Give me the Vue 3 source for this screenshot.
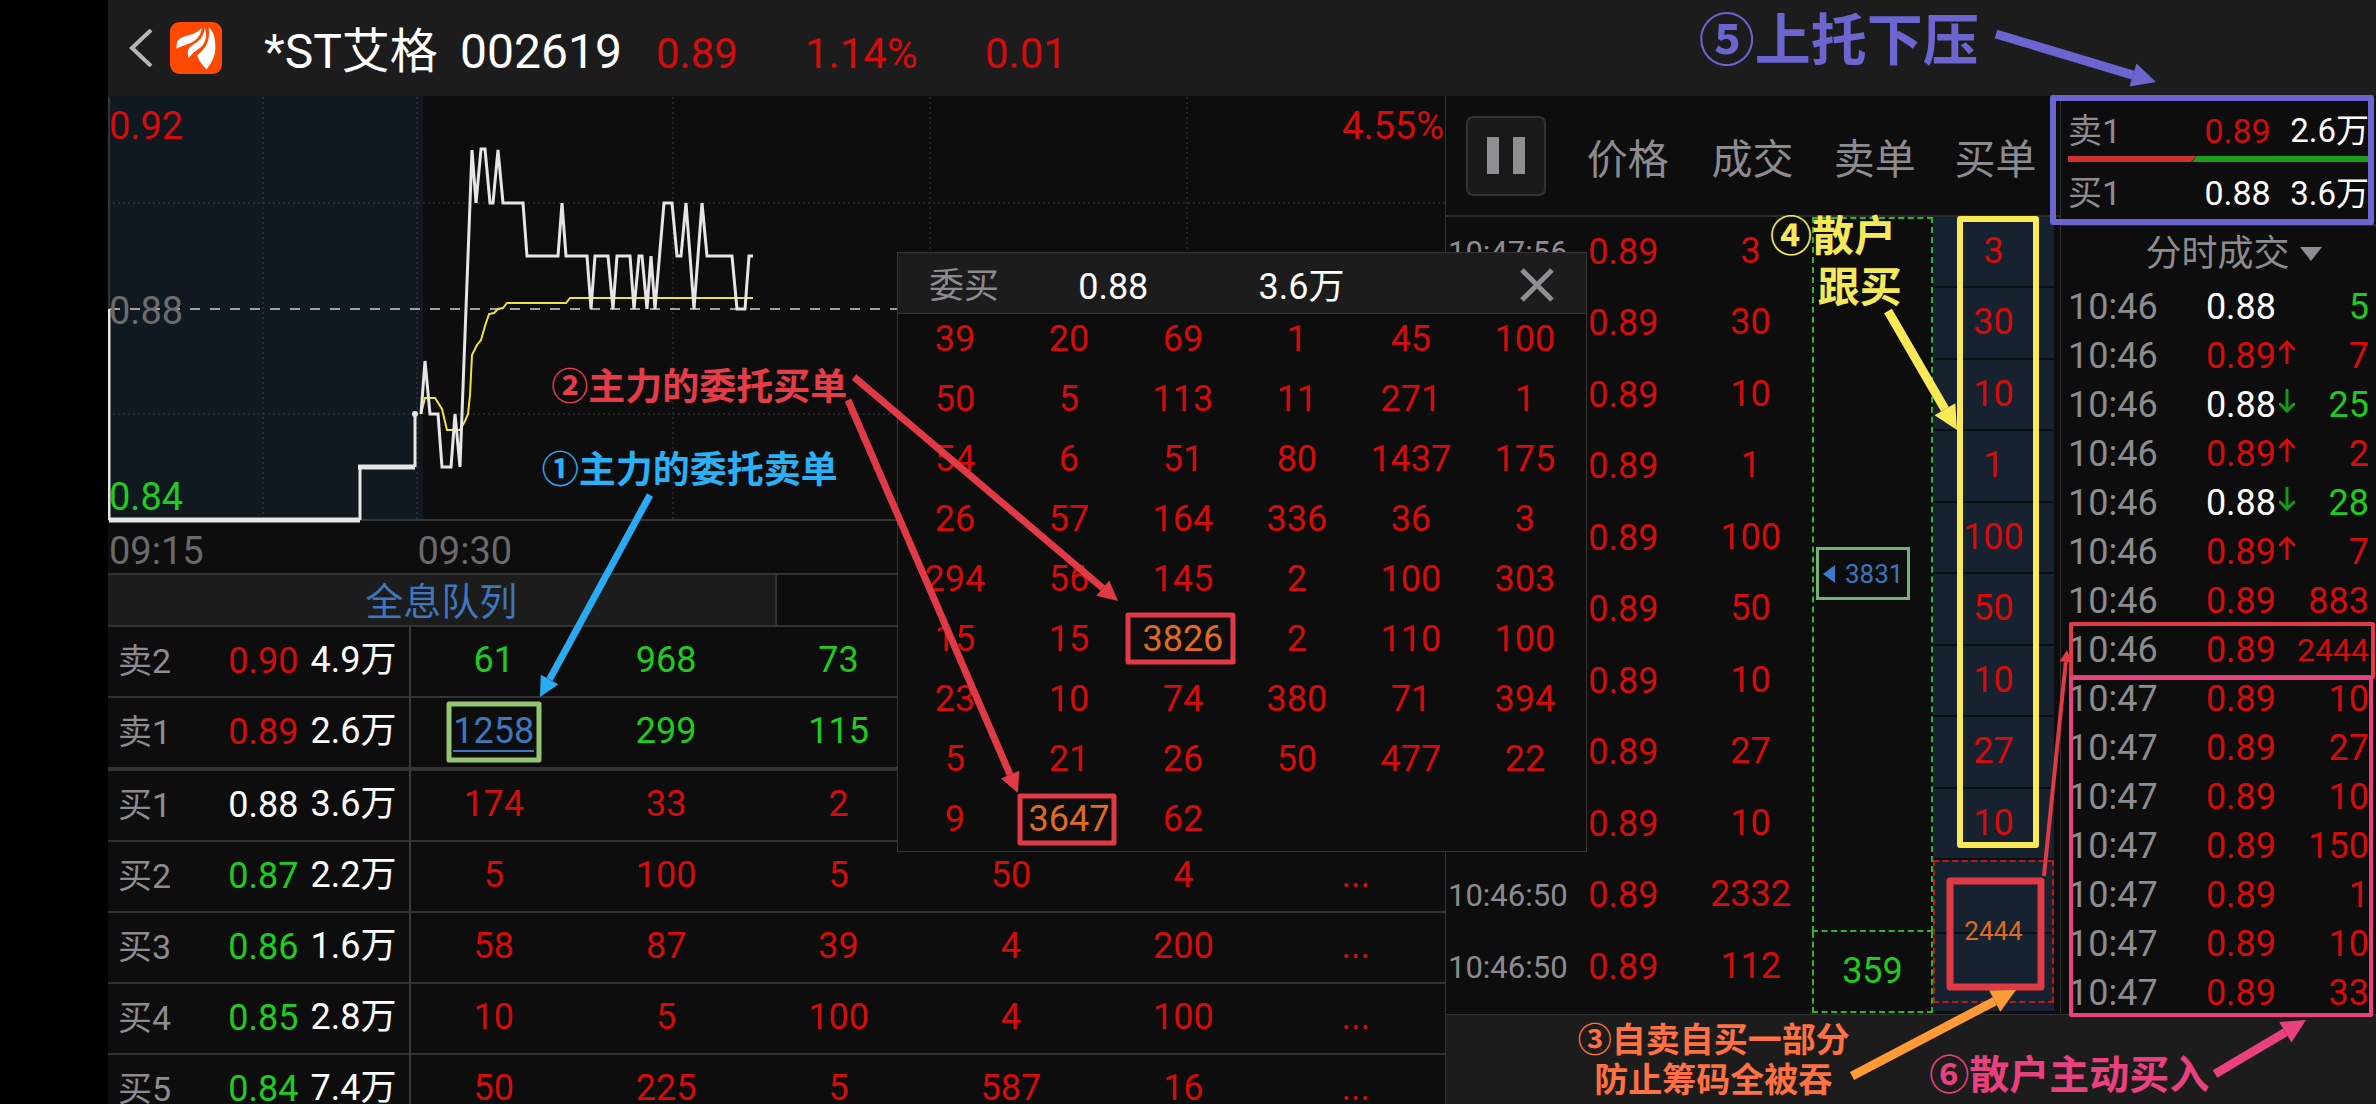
<script setup>
const levels = [
  { label: '卖2', price: '0.90', tone: 'up', qty: '4.9万', side: 'down', cells: ['61', '968', '73', '', '', ''] },
  { label: '卖1', price: '0.89', tone: 'up', qty: '2.6万', side: 'down', cells: ['1258', '299', '115', '', '', ''] },
  { label: '买1', price: '0.88', tone: 'flat', qty: '3.6万', side: 'up', cells: ['174', '33', '2', '', '', ''] },
  { label: '买2', price: '0.87', tone: 'down', qty: '2.2万', side: 'up', cells: ['5', '100', '5', '50', '4', '...'] },
  { label: '买3', price: '0.86', tone: 'down', qty: '1.6万', side: 'up', cells: ['58', '87', '39', '4', '200', '...'] },
  { label: '买4', price: '0.85', tone: 'down', qty: '2.8万', side: 'up', cells: ['10', '5', '100', '4', '100', '...'] },
  { label: '买5', price: '0.84', tone: 'down', qty: '7.4万', side: 'up', cells: ['50', '225', '5', '587', '16', '...'] },
]

const queue = [
  [39, 20, 69, 1, 45, 100],
  [50, 5, 113, 11, 271, 1],
  [54, 6, 51, 80, 1437, 175],
  [26, 57, 164, 336, 36, 3],
  [294, 56, 145, 2, 100, 303],
  [15, 15, 3826, 2, 110, 100],
  [23, 10, 74, 380, 71, 394],
  [5, 21, 26, 50, 477, 22],
  [9, 3647, 62, '', '', ''],
]

const deals = [
  { time: '10:47:56', vol: 3, buy: 3 },
  { time: '', vol: 30, buy: 30 },
  { time: '', vol: 10, buy: 10 },
  { time: '', vol: 1, buy: 1 },
  { time: '', vol: 100, buy: 100 },
  { time: '', vol: 50, buy: 50 },
  { time: '', vol: 10, buy: 10 },
  { time: '', vol: 27, buy: 27 },
  { time: '', vol: 10, buy: 10 },
  { time: '10:46:50', vol: 2332 },
  { time: '10:46:50', vol: 112 },
]

const ticks = [
  ['10:46', '0.88', '', 5],
  ['10:46', '0.89', 'u', 7],
  ['10:46', '0.88', 'd', 25],
  ['10:46', '0.89', 'u', 2],
  ['10:46', '0.88', 'd', 28],
  ['10:46', '0.89', 'u', 7],
  ['10:46', '0.89', '', 883],
  ['10:46', '0.89', '', 2444],
  ['10:47', '0.89', '', 10],
  ['10:47', '0.89', '', 27],
  ['10:47', '0.89', '', 10],
  ['10:47', '0.89', '', 150],
  ['10:47', '0.89', '', 1],
  ['10:47', '0.89', '', 10],
  ['10:47', '0.89', '', 33],
]

const arrows = [
  { color: '#e03a46', w: 7, from: [854, 377], to: [1118, 601], head: 20 },
  { color: '#e03a46', w: 7, from: [848, 400], to: [1018, 793], head: 20 },
  { color: '#29aaf2', w: 7, from: [650, 495], to: [540, 697], head: 20 },
  { color: '#ff9a36', w: 9, from: [1852, 1076], to: [2016, 990], head: 24 },
  { color: '#f9e957', w: 9, from: [1888, 311], to: [1957, 430], head: 24 },
  { color: '#6a65cf', w: 9, from: [1996, 34], to: [2156, 82], head: 24 },
  { color: '#e8417d', w: 9, from: [2215, 1074], to: [2306, 1020], head: 24 },
  { color: '#e03a46', w: 4, from: [2044, 876], to: [2067, 650], head: 12 },
]

function geometry(a) {
  const dx = a.to[0] - a.from[0]
  const dy = a.to[1] - a.from[1]
  const len = Math.hypot(dx, dy)
  const ux = dx / len
  const uy = dy / len
  const bx = a.to[0] - ux * a.head
  const by = a.to[1] - uy * a.head
  const h = a.head * 0.5
  return {
    ...a,
    end: [bx, by],
    tip: `${a.to[0]},${a.to[1]} ${bx - uy * h},${by + ux * h} ${bx + uy * h},${by - ux * h}`,
  }
}
const shapes = arrows.map(geometry)
</script>

<template>
  <div class="page">
    <header class="top">
      <button class="back" aria-label="返回">
        <svg viewBox="0 0 24 38" width="24" height="38"><path d="M22 1 3 19 22 37" /></svg>
      </button>
      <svg class="logo" viewBox="30 24 156 156" width="52" height="52" aria-hidden="true">
        <rect x="30" y="24" width="156" height="156" rx="28" fill="#ff4800" />
        <g fill="#fff">
          <path d="M50 104C49 84 53 76 64 71C88 61 112 60 125 41C124 60 114 74 98 84C88 90 62 97 50 104Z" />
          <path d="M86 133C82 118 82 106 91 98C106 87 132 78 134 40C142 62 139 84 124 98C110 110 98 114 86 133Z" />
          <path d="M140 166C128 154 116 142 112 124C134 106 152 86 146 40C160 50 168 76 166 104C164 134 152 148 140 166Z" />
        </g>
      </svg>
      <div class="title">
        <h1>*ST艾格</h1>
        <span class="code">002619</span>
        <span class="quote q1">0.89</span>
        <span class="quote q2">1.14%</span>
        <span class="quote">0.01</span>
      </div>
    </header>

    <main class="body">
      <section class="left">
        <div class="chart">
          <svg viewBox="108 96 1337 428" preserveAspectRatio="none">
            <rect x="108" y="96" width="315" height="424" fill="#101820" />
            <g class="dots">
              <path d="M263 97V520M417 97V520M673 97V520M930 97V520M1187 97V520" />
              <path d="M108 203H1445M108 414H1445" />
            </g>
            <path d="M108 520H1445" stroke="#363636" stroke-width="2" />
            <path d="M109 97V309" stroke="#555" stroke-width="1" />
            <path d="M110 309H1445" stroke="#a0a0a0" stroke-width="2" stroke-dasharray="10 10" />
            <polyline class="avg" points="421,414 425,398 435,398 442,409 447,430 460,430 465,421 468,414 470,395 472,355 477,345 481,340 485,326 489,314 494,313 498,309 503,308 507,303 566,303 570,298 753,298" />
            <path class="flat" d="M109 520H360M358 467H415" />
            <path class="price" d="M109 309V520M360 520V467M415 467V414" />
            <circle cx="415" cy="414" r="3" fill="#e6e6e6" />
            <polyline class="price" points="421,414 425,361 430,414 438,414 442,467 451,467 455,414 460,467 464,361 468,256 472,150 476,203 481,149 485,149 490,203 493,203 498,150 503,203 523,203 527,256 558,256 562,203 566,256 587,256 591,309 595,256 608,256 613,309 617,256 630,256 634,309 639,256 642,256 647,309 651,256 655,309 664,203 672,203 677,256 681,256 686,203 694,309 702,203 707,256 732,256 737,309 745,309 749,256 753,256" />
          </svg>
          <span class="lab red tl">0.92</span>
          <span class="lab red tr">4.55%</span>
          <span class="lab gray ml">0.88</span>
          <span class="lab green bl">0.84</span>
        </div>
        <div class="times"><span>09:15</span><span>09:30</span></div>
        <nav class="tabs"><button>全息队列</button></nav>
        <table class="levels">
          <colgroup><col class="c-label" /><col class="c-price" /><col class="c-qty" /><col v-for="n in 6" :key="n" /></colgroup>
          <tbody>
            <tr v-for="(l, i) in levels" :key="l.label" :class="{ split: i === 1 }">
              <th scope="row">{{ l.label }}</th>
              <td class="pr" :class="l.tone">{{ l.price }}</td>
              <td class="qty">{{ l.qty }}</td>
              <td v-for="(c, j) in l.cells" :key="j" class="num" :class="l.side">
                <a v-if="c === '1258'" href="#">{{ c }}</a>
                <template v-else>{{ c }}</template>
              </td>
            </tr>
          </tbody>
        </table>
      </section>

      <section class="mid">
        <div class="mid-head">
          <div class="pause-box">
            <button class="pause" aria-label="暂停"><i></i><i></i></button>
          </div>
          <span>价格</span><span class="c">成交</span><span class="c">卖单</span><span class="c">买单</span>
        </div>
        <table class="deals">
          <colgroup><col class="d1" /><col class="d2" /><col class="d3" /><col class="d4" /><col class="d5" /><col class="d6" /></colgroup>
          <tbody>
            <tr v-for="(d, i) in deals" :key="i" :class="i % 2 ? 'odd' : 'even'">
              <td class="t">{{ d.time }}</td>
              <td class="p">0.89</td>
              <td class="v">{{ d.vol }}</td>
              <td v-if="i === 0" class="sell big" rowspan="10">
                <div class="tag">
                  <svg viewBox="0 0 12 18" width="12" height="18"><path d="M0 9 12 0V18Z" fill="#3a7cc8" /></svg>
                  <span>3831</span>
                </div>
              </td>
              <td v-if="i === 10" class="sell last" rowspan="2">359</td>
              <td v-if="i < 9" class="buy">{{ d.buy }}</td>
              <td v-if="i === 9" class="buy main-buy" rowspan="2">2444</td>
              <td></td>
            </tr>
            <tr class="filler"><td></td><td></td><td></td><td class="buy"></td><td></td></tr>
          </tbody>
        </table>
      </section>

      <section class="right">
        <div class="depth">
          <div class="line"><span>卖1</span><span class="up">0.89</span><b>2.6万</b></div>
          <svg class="ratio" viewBox="0 0 301 6" preserveAspectRatio="none">
            <path d="M0 0H129L123 6H0Z" fill="#cf3131" /><path d="M129 0H301V6H124Z" fill="#17a017" />
          </svg>
          <div class="line l2"><span>买1</span><span class="flat">0.88</span><b>3.6万</b></div>
        </div>
        <div class="pick">
          <select aria-label="成交类型"><option>分时成交</option></select>
          <svg viewBox="0 0 22 14" width="22" height="14"><path d="M0 0H22L11 14Z" fill="#8e8e92" /></svg>
        </div>
        <table class="ticks">
          <tbody>
            <tr v-for="(t, i) in ticks" :key="i">
              <td class="tt">{{ t[0] }}</td>
              <td class="tp" :class="t[1] === '0.88' ? 'flat' : 'up'">
                {{ t[1] }}<svg v-if="t[2]" :class="t[2]" viewBox="0 0 16 24" width="16" height="24"><path d="M8 23V2M1 9 8 2 15 9" /></svg>
              </td>
              <td class="tv" :class="[t[1] === '0.88' ? 'down' : 'up', { wide: t[3] === 2444 }]">{{ t[3] }}</td>
            </tr>
          </tbody>
        </table>
      </section>
      <footer class="foot"></footer>
    </main>

    <section class="popup">
      <div class="popup-head">
        <span class="k">委买</span><span>0.88</span><span>3.6万</span>
        <button aria-label="关闭"><svg viewBox="0 0 34 34" width="34" height="34"><path d="M2 2 32 32M32 2 2 32" /></svg></button>
      </div>
      <div class="popup-body">
        <table>
          <tbody>
            <tr v-for="(r, i) in queue" :key="i">
              <td v-for="(c, j) in r" :key="j" :class="{ hot: c > 3000 }">{{ c }}</td>
            </tr>
          </tbody>
        </table>
      </div>
    </section>

    <svg class="marks" viewBox="0 0 2376 1104" preserveAspectRatio="none" aria-hidden="true">
      <g fill="none" stroke-linejoin="round">
        <rect x="449" y="704" width="90" height="56" stroke="#93c572" stroke-width="5" />
        <rect x="1128" y="615" width="105" height="47" stroke="#e03a46" stroke-width="5" />
        <rect x="1020" y="796" width="94" height="47" stroke="#e03a46" stroke-width="5" />
        <rect x="1960" y="219" width="76" height="626" stroke="#f9e957" stroke-width="6" />
        <rect x="1950" y="881" width="91" height="106" stroke="#e03a46" stroke-width="7" />
        <rect x="2053" y="98" width="318" height="124" stroke="#6a65cf" stroke-width="6" />
        <rect x="2071" y="624" width="302" height="53" stroke="#e03a46" stroke-width="4" />
        <rect x="2071" y="678" width="300" height="337" stroke="#e8417d" stroke-width="4" />
      </g>
      <g v-for="(s, i) in shapes" :key="i">
        <line :x1="s.from[0]" :y1="s.from[1]" :x2="s.end[0]" :y2="s.end[1]" :stroke="s.color" :stroke-width="s.w" />
        <polygon :points="s.tip" :fill="s.color" />
      </g>
    </svg>
    <p class="note n1">①主力的委托卖单</p>
    <p class="note n2">②主力的委托买单</p>
    <p class="note n3">③自卖自买一部分</p>
    <p class="note n3b">防止筹码全被吞</p>
    <p class="note n4">④散户</p>
    <p class="note n4b">跟买</p>
    <p class="note n5">⑤上托下压</p>
    <p class="note n6">⑥散户主动买入</p>
  </div>
</template>

<style>
body { background: #000; }
</style>

<style scoped>
.page {
  position: relative;
  display: flex;
  flex-direction: column;
  box-sizing: border-box;
  height: 100vh;
  padding-left: 108px;
  overflow: hidden;
  background: #000;
  color: #fff;
  font-family: Roboto, "Noto Sans CJK SC", sans-serif;
  font-size: 36px;
}
button, select { margin: 0; padding: 0; border: 0; background: none; color: inherit; font: inherit; }
table { width: 100%; border-collapse: separate; border-spacing: 0; table-layout: fixed; }
td, th { padding: 0; font-weight: 400; }
svg { display: block; }
.up, .red { color: #d40c0c; }
.down, .green { color: #1fcb1f; }
.flat { color: #fff; }
.gray { color: #6c6c6c; }

.top { display: flex; flex: none; align-items: center; height: 96px; background: #1c1c1c; white-space: nowrap; }
.back { margin-left: 21px; }
.back path { fill: none; stroke: #b4b4b4; stroke-width: 4; }
.logo { margin-left: 17px; }
.title { display: flex; align-items: baseline; padding: 10px 0 0 42px; line-height: 60px; }
h1 { margin: 0; width: 196px; font-size: 48px; font-weight: 400; line-height: 60px; }
.code { width: 196px; font-size: 48px; }
.quote { color: #d40c0c; font-size: 42px; }
.q1 { width: 149px; }
.q2 { width: 180px; }

.body {
  display: grid;
  flex: 1;
  min-height: 0;
  grid-template-columns: minmax(0, 1337fr) minmax(0, 616fr) minmax(0, 315fr);
  grid-template-rows: 918px minmax(0, 1fr);
  background: #0d0d0d;
}
.left { grid-row: 1 / 3; min-height: 0; }
.chart { position: relative; height: 428px; }
.chart svg { width: 100%; height: 428px; }
.chart path, .chart polyline { fill: none; }
.dots path { stroke: #3e3e3e; stroke-width: 1; stroke-dasharray: 2 3; }
.chart .avg { stroke: #f0e23c; stroke-width: 2; }
.chart .price { stroke: #e6e6e6; stroke-width: 3; }
.chart .flat { stroke: #e6e6e6; stroke-width: 5; }
.lab { position: absolute; font-size: 38px; line-height: 40px; }
.tl { left: 1px; top: 10px; }
.tr { right: 1px; top: 10px; }
.ml { left: 1px; top: 195px; }
.bl { left: 1px; top: 381px; }
.times { display: flex; height: 49px; color: #6a6a6a; font-size: 38px; line-height: 54px; }
.times span { width: 23%; padding-left: 1px; }
.tabs { height: 50px; border: solid #333; border-width: 2px 0; }
.tabs button { width: 50%; height: 50px; padding-top: 4px; border-right: 2px solid #333; background: #1c1c1c; color: #3f76bd; font-size: 38px; line-height: 46px; }
.levels tr { height: 71px; }
.levels td, .levels th { box-sizing: border-box; height: 71px; border-bottom: 2px solid #333; line-height: 67px; vertical-align: top; white-space: nowrap; }
.levels .split td, .levels .split th { height: 73px; border-bottom-width: 4px; }
.levels .c-label { width: 9%; }
.levels .c-price { width: 6%; }
.levels .c-qty { width: 102px; }
.levels th { padding-left: 10px; color: #8c8c90; font-size: 34px; line-height: 69px; text-align: left; }
.levels .pr { line-height: 69px; }
.levels .qty { border-right: 2px solid #3a3a3a; padding-right: 12px; text-align: right; }
.levels .num { padding-right: 6px; text-align: center; }
.num a { display: inline-block; height: 52px; border-bottom: 2px solid #3f76bd; color: #3f76bd; text-decoration: none; }

.mid { border-left: 1px solid #333; box-sizing: border-box; min-width: 0; }
.mid-head, .deals { border-right: 1px solid #333; box-sizing: border-box; }
.mid-head {
  display: grid;
  grid-template-columns: 141fr 102fr 124fr 121fr 121fr 6fr;
  align-items: center;
  height: 121px;
  border-bottom: 2px solid #2c2c2c;
  color: #8c8c90;
  font-size: 41px;
  white-space: nowrap;
}
.mid-head .c { padding-left: 4px; text-align: center; }
.pause-box { display: flex; padding-left: 20px; }
.pause { display: flex; justify-content: center; align-items: center; gap: 14px; box-sizing: border-box; width: 80px; height: 80px; border: 2px solid #333; border-radius: 7px; background: #191919; }
.pause i { width: 12px; height: 37px; background: #8e8e93; }
.d1 { width: 23%; }
.d3 { width: 20%; }
.d4, .d5 { width: 121px; }
.d6 { width: 6px; }
.deals tr { height: 71px; }
.deals tr.odd { height: 72px; }
.deals tr.filler { height: 10px; }
.deals td { line-height: 69px; vertical-align: top; }
.deals .filler td { line-height: 0; }
.deals .t { padding-left: 2px; color: #8c8c90; font-size: 31px; line-height: 71px; }
.deals .p { padding-left: 1px; color: #d40c0c; line-height: 71px; }
.v { color: #d40c0c; text-align: center; }
.deals .sell { border: 2px dashed #2db52d; color: #1fcb1f; text-align: center; }
.deals .big { padding-top: 328px; }
.deals .last { border-top: 0; line-height: 78px; }
.tag { display: flex; align-items: center; gap: 10px; box-sizing: border-box; width: 94px; height: 53px; margin-left: 2px; padding-left: 4px; border: 3px solid #74b277; color: #3a76bd; font-size: 26px; line-height: 46px; }
.deals .buy { border-bottom: 2px solid #0b0f14; background: #16222f; color: #d40c0c; text-align: center; }
.deals .main-buy { border: 2px dashed #c01818; background: linear-gradient(#16222f 70px, #0b0f14 70px, #0b0f14 72px, #16222f 72px); color: #de6b22; font-size: 26px; line-height: 138px; }

.right { min-width: 0; min-height: 0; overflow: hidden; }
.depth { box-sizing: border-box; height: 130px; padding: 10px 7px 0 7px; border-bottom: 2px solid #2a2a2a; }
.line { display: grid; grid-template-columns: 136fr 66fr 98fr; height: 50px; color: #8c8c90; font-size: 34px; line-height: 50px; white-space: nowrap; }
.line .up { color: #d40c0c; }
.line .flat { color: #fff; }
.line b { color: #fff; font-size: 33px; font-weight: 400; text-align: right; }
.l2 { height: 62px; line-height: 63px; }
.ratio { width: 100%; height: 6px; }
.pick { display: flex; justify-content: center; align-items: center; gap: 8px; height: 55px; padding-left: 30px; color: #8c8c90; }
.pick select { appearance: none; width: 146px; line-height: 48px; }
.ticks tr { height: 49px; }
.ticks td { height: 49px; padding-top: 3px; box-sizing: border-box; line-height: 46px; white-space: nowrap; }
.ticks .tt { width: 46%; padding-left: 7px; color: #8c8c90; }
.tp { width: 28%; }
.tp svg { display: inline-block; margin-left: 3px; vertical-align: 4px; }
.tp path { fill: none; stroke: #d40c0c; stroke-width: 3; stroke-linecap: round; }
.tp .d { transform: rotate(180deg); }
.tp .d path { stroke: #179a17; }
.ticks .tv { padding-right: 7px; text-align: right; }
.wide { font-size: 32px; }

.foot { grid-column: 2 / 4; border-top: 1px solid #333; border-left: 1px solid #333; background: #1c1c1c; }

.popup { position: absolute; left: 37.75%; top: 252px; box-sizing: border-box; width: 29.04%; height: 600px; border: 1px solid #363636; background: #0d0d0d; }
.popup-head { display: grid; grid-template-columns: 149fr 180fr 261fr 66fr; align-items: center; height: 60px; padding-left: 31px; border-bottom: 1px solid #363636; background: #1c1c1c; line-height: 60px; }
.popup-head span { padding-top: 4px; }
.popup-head .k { color: #8c8c90; font-size: 35px; }
.popup-head path { stroke: #8e8e93; stroke-width: 5; }
.popup-body { padding-right: 4px; }
.popup td { height: 60px; color: #d40c0c; line-height: 50px; text-align: center; vertical-align: top; }
.popup .hot { color: #de6b22; }

.marks { position: absolute; left: 0; top: 0; width: 100%; height: 1104px; pointer-events: none; }
.note { position: absolute; margin: 0; font-family: "Noto Sans CJK SC", sans-serif; font-weight: 700; white-space: nowrap; }
.n1 { left: 22.8%; top: 442px; color: #2ab0f5; font-size: 37px; line-height: 50px; }
.n2 { left: 23.2%; top: 359px; color: #e63c48; font-size: 37px; line-height: 50px; }
.n3 { left: 66.4%; top: 1018px; color: #ff7142; font-size: 34px; line-height: 40px; }
.n3b { left: 67.1%; top: 1058px; color: #ff7142; font-size: 34px; line-height: 40px; }
.n4 { left: 74.5%; top: 208px; color: #f3e95a; font-size: 42px; line-height: 50px; }
.n4b { left: 76.5%; top: 259px; color: #f3e95a; font-size: 42px; line-height: 50px; }
.n5 { left: 71.5%; top: 6px; color: #6a65cf; font-size: 56px; line-height: 60px; }
.n6 { left: 81.2%; top: 1047px; color: #e8417d; font-size: 40px; line-height: 50px; }
</style>
